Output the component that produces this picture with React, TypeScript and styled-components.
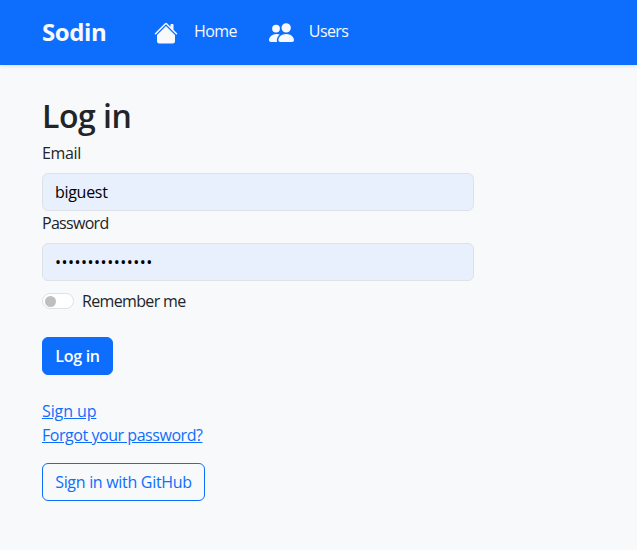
import styled, { createGlobalStyle } from "styled-components"
import { BsHouseFill, BsPeopleFill } from "react-icons/bs"

const GlobalStyle = createGlobalStyle`
  * { box-sizing: border-box; }
  html, body { margin: 0; padding: 0; }
  body {
    background: #f8f9fa;
    color: #212529;
    font-family: "Open Sans", "Noto Sans", "Liberation Sans", sans-serif;
    font-size: 16px;
    line-height: 24px;
    min-height: 550px;
    overflow: hidden;
  }
`

const NavBar = styled.nav`
  display: flex;
  align-items: center;
  height: 65px;
  padding-left: 42px;
  background: #0d6efd;
  box-shadow: 0 1px 4px rgba(0, 0, 0, 0.12);
`

const Brand = styled.a`
  width: 112px;
  padding-bottom: 2px;
  color: #f8f9fa;
  font-size: 24px;
  font-weight: 700;
  letter-spacing: -0.4px;
`

const NavLinks = styled.div`
  display: flex;
  align-items: center;
  gap: 32px;
`

const NavLink = styled.a<{ $gap: number }>`
  display: flex;
  align-items: center;
  gap: ${(p) => p.$gap}px;
  color: #f8f9fa;
  font-size: 16px;
  letter-spacing: -0.6px;
`

const NavText = styled.span`
  padding-bottom: 3px;
`

const Main = styled.main`
  display: flex;
  flex-direction: column;
  align-items: flex-start;
  width: 474px;
  padding: 32px 0 0 42px;
`

const Title = styled.h1`
  margin: 0 0 6px;
  font-size: 32px;
  font-weight: 600;
  line-height: 38px;
  letter-spacing: -0.5px;
`

const Label = styled.label<{ $spacing: number }>`
  display: block;
  margin-bottom: 8px;
  letter-spacing: ${(p) => p.$spacing}px;
  color: #212529;
`

const Input = styled.input<{ $spacing: number }>`
  display: block;
  width: 100%;
  height: 38px;
  padding: 6px 12px;
  background: #e8f0fe;
  border: 1px solid #dee2e6;
  border-radius: 6px;
  color: #000;
  font: inherit;
  letter-spacing: ${(p) => p.$spacing}px;
`

const Field = styled.div`
  width: 100%;
`

const SwitchRow = styled.div`
  display: flex;
  align-items: center;
  gap: 8px;
  height: 24px;
  margin-top: 8px;
  margin-bottom: 24px;
  letter-spacing: -0.65px;
`

const SwitchTrack = styled.span`
  display: flex;
  align-items: center;
  width: 32px;
  height: 16px;
  padding-left: 2px;
  background: #fff;
  border: 1px solid #dee2e6;
  border-radius: 8px;
`

const SwitchKnob = styled.span`
  width: 11px;
  height: 11px;
  border-radius: 50%;
  background: #bfbfbf;
`

const PrimaryButton = styled.button`
  height: 38px;
  width: 71px;
  padding: 0;
  background: #0d6efd;
  border: 1px solid #0d6efd;
  border-radius: 6px;
  color: #fff;
  font: inherit;
  font-weight: 600;
  letter-spacing: -0.3px;
`

const LinkList = styled.div`
  display: flex;
  flex-direction: column;
  align-items: flex-start;
  margin-top: 24px;
`

const TextLink = styled.a<{ $spacing: number }>`
  color: #0d6efd;
  text-decoration: underline;
  letter-spacing: ${(p) => p.$spacing}px;
`

const OutlineButton = styled.button`
  height: 38px;
  width: 163px;
  margin-top: 16px;
  padding: 0;
  background: transparent;
  border: 1px solid #0d6efd;
  border-radius: 6px;
  color: #0d6efd;
  font: inherit;
  letter-spacing: -0.3px;
`

export default function App() {
  return (
    <>
      <GlobalStyle />
      <NavBar>
        <Brand>Sodin</Brand>
        <NavLinks>
          <NavLink $gap={16}>
            <BsHouseFill size={24} />
            <NavText>Home</NavText>
          </NavLink>
          <NavLink $gap={15}>
            <BsPeopleFill size={25} />
            <NavText>Users</NavText>
          </NavLink>
        </NavLinks>
      </NavBar>
      <Main>
        <Title>Log in</Title>
        <Field>
          <Label $spacing={-0.35}>Email</Label>
          <Input type="text" $spacing={-0.3} defaultValue="biguest" />
        </Field>
        <Field>
          <Label $spacing={-0.7}>Password</Label>
          <Input type="password" $spacing={0.5} defaultValue="bigpassword1234" />
        </Field>
        <SwitchRow>
          <SwitchTrack>
            <SwitchKnob />
          </SwitchTrack>
          Remember me
        </SwitchRow>
        <PrimaryButton>Log in</PrimaryButton>
        <LinkList>
          <TextLink $spacing={-0.1}>Sign up</TextLink>
          <TextLink $spacing={-0.45}>Forgot your password?</TextLink>
        </LinkList>
        <OutlineButton>Sign in with GitHub</OutlineButton>
      </Main>
    </>
  )
}
